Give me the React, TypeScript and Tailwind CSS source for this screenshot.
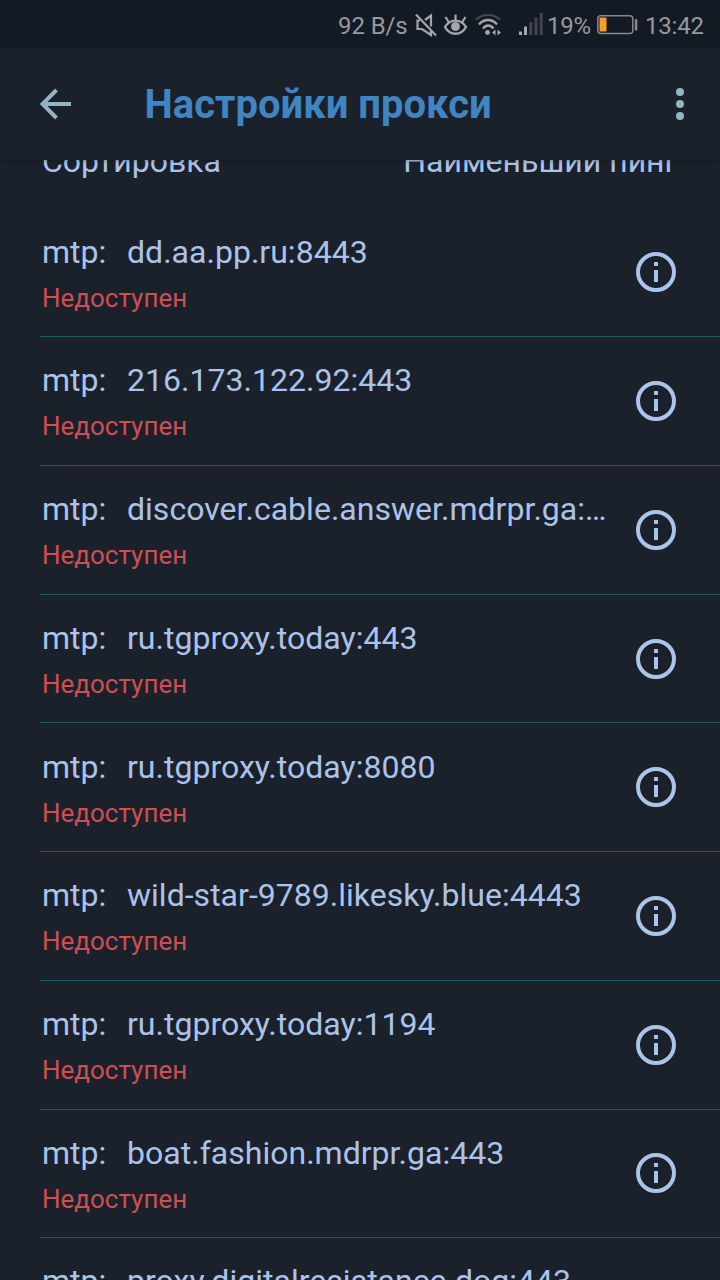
import React from 'react';

interface Proxy {
  address: string;
}

const proxies: Proxy[] = [
  { address: 'dd.aa.pp.ru:8443' },
  { address: '216.173.122.92:443' },
  { address: 'discover.cable.answer.mdrpr.ga:443' },
  { address: 'ru.tgproxy.today:443' },
  { address: 'ru.tgproxy.today:8080' },
  { address: 'wild-star-9789.likesky.blue:4443' },
  { address: 'ru.tgproxy.today:1194' },
  { address: 'boat.fashion.mdrpr.ga:443' },
  { address: 'proxy.digitalresistance.dog:443' },
];

function MutedIcon() {
  return (
    <svg width="24" height="24" viewBox="0 0 24 24" fill="none" stroke="#a2a5a9" strokeWidth="2.2">
      <path d="M5 7.5H2.5v8.500H7l9 6v-4.500M10 7l6-4.500v11" />
      <path d="M1 1.500l20 21" />
    </svg>
  );
}

function EyeIcon() {
  return (
    <svg width="26" height="24" viewBox="0 0 26 24" fill="none" stroke="#a2a5a9" strokeWidth="2.4">
      <path d="M2 14C7 5.500 18 5.500 23 14C18 23 7 23 2 14Z" />
      <path d="M12.500 1.500v6M2.500 4l3.500 5.500M22.500 4l-3.500 5.500" strokeWidth="2.2" />
      <circle cx="12.500" cy="13.500" r="4.500" fill="#a2a5a9" stroke="none" />
    </svg>
  );
}

function WifiIcon() {
  return (
    <svg width="28" height="24" viewBox="0 0 28 24" fill="none" strokeWidth="2">
      <path d="M1 6.500C8 .5 18 .5 25 6.500" stroke="#454a52" />
      <path d="M4 11.500c5-6 13-6 18 0M8 15.500c3-4 7.500-4 10.500 0" stroke="#a2a5a9" strokeWidth="2.300" />
      <circle cx="12.500" cy="19.500" r="2.400" fill="#a2a5a9" />
      <path d="M20.500 16.500v6l-3.500-3zM22.500 16.500v6l3.500-3z" fill="#a2a5a9" />
    </svg>
  );
}

function SignalIcon() {
  return (
    <svg width="24" height="22" viewBox="0 0 24 22">
      <path d="M0 18.500h3V22H0zM5 13.500h3V22H5z" fill="#a2a5a9" />
      <path d="M10.300 9h3v13h-3zM15.500 4.500h3V22h-3zM20.700 0h3v22h-3z" fill="#41464e" />
    </svg>
  );
}

function BatteryIcon() {
  return (
    <svg width="41" height="20" viewBox="0 0 41 20" fill="none">
      <rect x=".8" y=".8" width="35" height="17.6" rx="3" stroke="#85888d" strokeWidth="1.5" />
      <rect x="2.5" y="2.5" width="7" height="14" rx="1" fill="#fb9d24" />
      <rect x="37.8" y="4" width="2.6" height="11.5" rx="1" fill="#85888d" />
    </svg>
  );
}

function InfoIcon() {
  return (
    <svg width="40" height="40" viewBox="0 0 40 40">
      <circle cx="20" cy="20" r="18" fill="none" stroke="#abc5ea" strokeWidth="4" />
      <path d="M18 10h4v4h-4zM18 18h4v12h-4z" fill="#abc5ea" />
    </svg>
  );
}

function StatusBar() {
  return (
    <div className="flex h-12 shrink-0 items-center bg-[#141a24] pt-[2px] pl-[338px] text-[24px] leading-none whitespace-nowrap text-[#96999e]">
      <span className="w-[77px] pt-px tracking-[-0.1px]">92 B/s</span>
      <span className="w-[28px]"><MutedIcon /></span>
      <span className="w-[32px]"><EyeIcon /></span>
      <span className="w-[44px]"><WifiIcon /></span>
      <span className="w-[28px] pb-[2px]"><SignalIcon /></span>
      <span className="w-[50px] pt-px tracking-[-0.3px]">19%</span>
      <span className="w-[48px] pb-px"><BatteryIcon /></span>
      <span className="pt-px tracking-[-0.2px]">13:42</span>
    </div>
  );
}

function Header() {
  return (
    <header className="z-10 flex h-28 shrink-0 items-center bg-[#1b212b] pr-9 pl-10 shadow-[0_1px_4px_rgba(0,0,0,0.3)]">
      <svg width="32" height="32" viewBox="0 0 32 32" fill="none" stroke="#94b3c4" strokeWidth="4">
        <path d="M31 16H3M16.500 2L2.500 16l14 14" />
      </svg>
      <h1 className="ml-[72.5px] flex-1 pt-px text-[40px] leading-none font-bold text-[#4084c1]">Настройки прокси</h1>
      <svg width="8" height="32" viewBox="0 0 8 32" fill="#94b3c4">
        <circle cx="4" cy="4" r="4" />
        <circle cx="4" cy="16" r="4" />
        <circle cx="4" cy="28" r="4" />
      </svg>
    </header>
  );
}

function ProxyRow({ address }: Proxy) {
  return (
    <div className="ml-10 flex h-[128.7px] shrink-0 border-b border-[#1e5a63] pr-11 pl-[2px]">
      <div className="w-[566px] pt-[23.1px]">
        <div className="flex h-10 items-center text-[32px] text-[#abc3e8]">
          <span className="w-[85px] shrink-0">mtp:</span>
          <span className="truncate tracking-[0.02px]">{address}</span>
        </div>
        <div className="mt-[8px] h-9 text-[26px] leading-9 text-[#cd4e53]">Недоступен</div>
      </div>
      <div className="ml-auto pt-[43.8px]">
        <InfoIcon />
      </div>
    </div>
  );
}

export default function App() {
  return (
    <div className="flex h-[1280px] w-[720px] flex-col overflow-hidden bg-[#1b212b] font-['Roboto',sans-serif]">
      <StatusBar />
      <Header />
      <main className="flex min-h-0 flex-1 flex-col overflow-hidden">
        <div className="-mt-[19px] flex h-[67.7px] shrink-0 justify-between pr-[42px] pl-[42px] text-[32px] leading-10 text-[#abc3e8]">
          <span>Сортировка</span>
          <span>Наименьший пинг</span>
        </div>
        {proxies.map((proxy) => (
          <ProxyRow key={proxy.address} address={proxy.address} />
        ))}
      </main>
    </div>
  );
}
